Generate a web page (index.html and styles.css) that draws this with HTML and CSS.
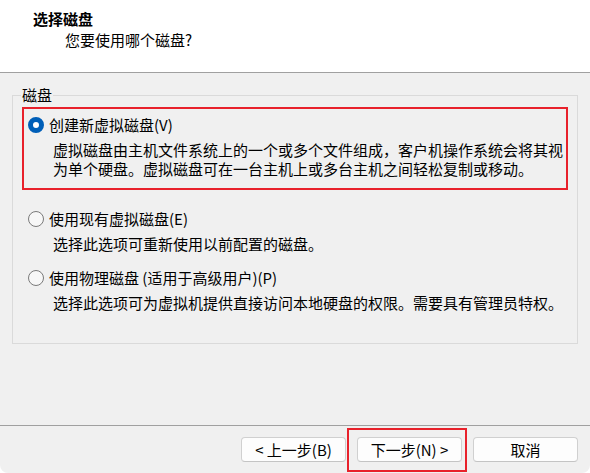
FILE: index.html
```html
<!DOCTYPE html>
<html lang="zh-CN">
<head>
  <meta charset="UTF-8">
  <meta name="viewport" content="width=device-width, initial-scale=1.0">
  <title>选择磁盘</title>
  <link rel="stylesheet" href="styles.css">
</head>
<body>
  <div class="window">
    <!-- Judul wizard -->
    <div class="header">
      <div class="title">选择磁盘</div>
      <div class="subtitle">您要使用哪个磁盘?</div>
    </div>

    <div class="content">
      <fieldset class="group">
        <legend>磁盘</legend>

        <div class="option marked">
          <label class="option-row"><input type="radio" name="disk" value="new" checked>创建新虚拟磁盘(V)</label>
          <div class="desc">虚拟磁盘由主机文件系统上的一个或多个文件组成，客户机操作系统会将其视<br>为单个硬盘。虚拟磁盘可在一台主机上或多台主机之间轻松复制或移动。</div>
        </div>

        <div class="option">
          <label class="option-row"><input type="radio" name="disk" value="existing">使用现有虚拟磁盘(E)</label>
          <div class="desc">选择此选项可重新使用以前配置的磁盘。</div>
        </div>

        <div class="option">
          <label class="option-row"><input type="radio" name="disk" value="physical">使用物理磁盘 (适用于高级用户)(P)</label>
          <div class="desc">选择此选项可为虚拟机提供直接访问本地硬盘的权限。需要具有管理员特权。</div>
        </div>
      </fieldset>
    </div>

    <div class="footer">
      <button type="button" class="btn">&lt; 上一步(B)</button>
      <button type="button" class="btn marked">下一步(N) &gt;</button>
      <button type="button" class="btn">取消</button>
    </div>
  </div>
</body>
</html>
```

FILE: styles.css
```css
body {
  margin: 0;
  background: #fff;
  font-family: "Noto Sans CJK SC", "Microsoft YaHei", sans-serif;
  font-size: 15px;
  color: #000;
}

.window { width: 590px; height: 473px; display: flex; flex-direction: column; }

.header {
  height: 73px;
  box-sizing: border-box;
  background: #fff;
  border-bottom: 1px solid #a0a0a0;
  padding: 9px 0 0 33px;
}
.title { font-weight: bold; line-height: 20px; }
.subtitle { line-height: 20px; margin: 1px 0 0 32px; }

.content {
  height: 352px;
  box-sizing: border-box;
  background: #f0f0f0;
  padding: 12px 12px 0;
}

.group {
  margin: 0;
  min-width: 0;
  padding: 2px 9px 29px;
  border: 1px solid #dadada;
}
.group legend { padding: 0 1px; margin-left: -1px; line-height: 20px; }

.option {
  border: 2px solid transparent;
  padding: 6px 4px 0;
  margin-top: 5px;
}
.option.marked {
  border-color: #e8212b;
  padding-bottom: 10px;
  margin: 0 0 11px;
}

.option-row { display: flex; align-items: center; gap: 5px; height: 20px; line-height: 20px; }
.option-row input {
  appearance: none;
  margin: 0;
  width: 16px;
  height: 16px;
  border: 1px solid #7a7a7a;
  border-radius: 50%;
  background: #f7f7f7;
  box-sizing: border-box;
}
.option-row input:checked {
  border: 5px solid #005fb8;
  background: #fff;
}

.desc { margin: 5px 0 0 25px; line-height: 19px; white-space: nowrap; }

.footer {
  flex: 1;
  background: #f0f0f0;
  border-top: 1px solid #a0a0a0;
  border-radius: 0 0 8px 8px;
  display: flex;
  justify-content: flex-end;
  align-items: flex-start;
  gap: 11px;
  padding: 11px 12px 0;
}

.btn {
  width: 105px;
  height: 25px;
  padding: 0;
  background: #fdfdfd;
  border: 1px solid #d0d0d0;
  border-bottom-color: #c4c4c4;
  border-radius: 4px;
  font: inherit;
  line-height: 23px;
  color: #000;
}
.btn.marked { position: relative; }
.btn.marked::after {
  content: "";
  position: absolute;
  top: -10px;
  bottom: -11px;
  left: -11px;
  right: -6px;
  border: 2px solid #e8212b;
}
```
